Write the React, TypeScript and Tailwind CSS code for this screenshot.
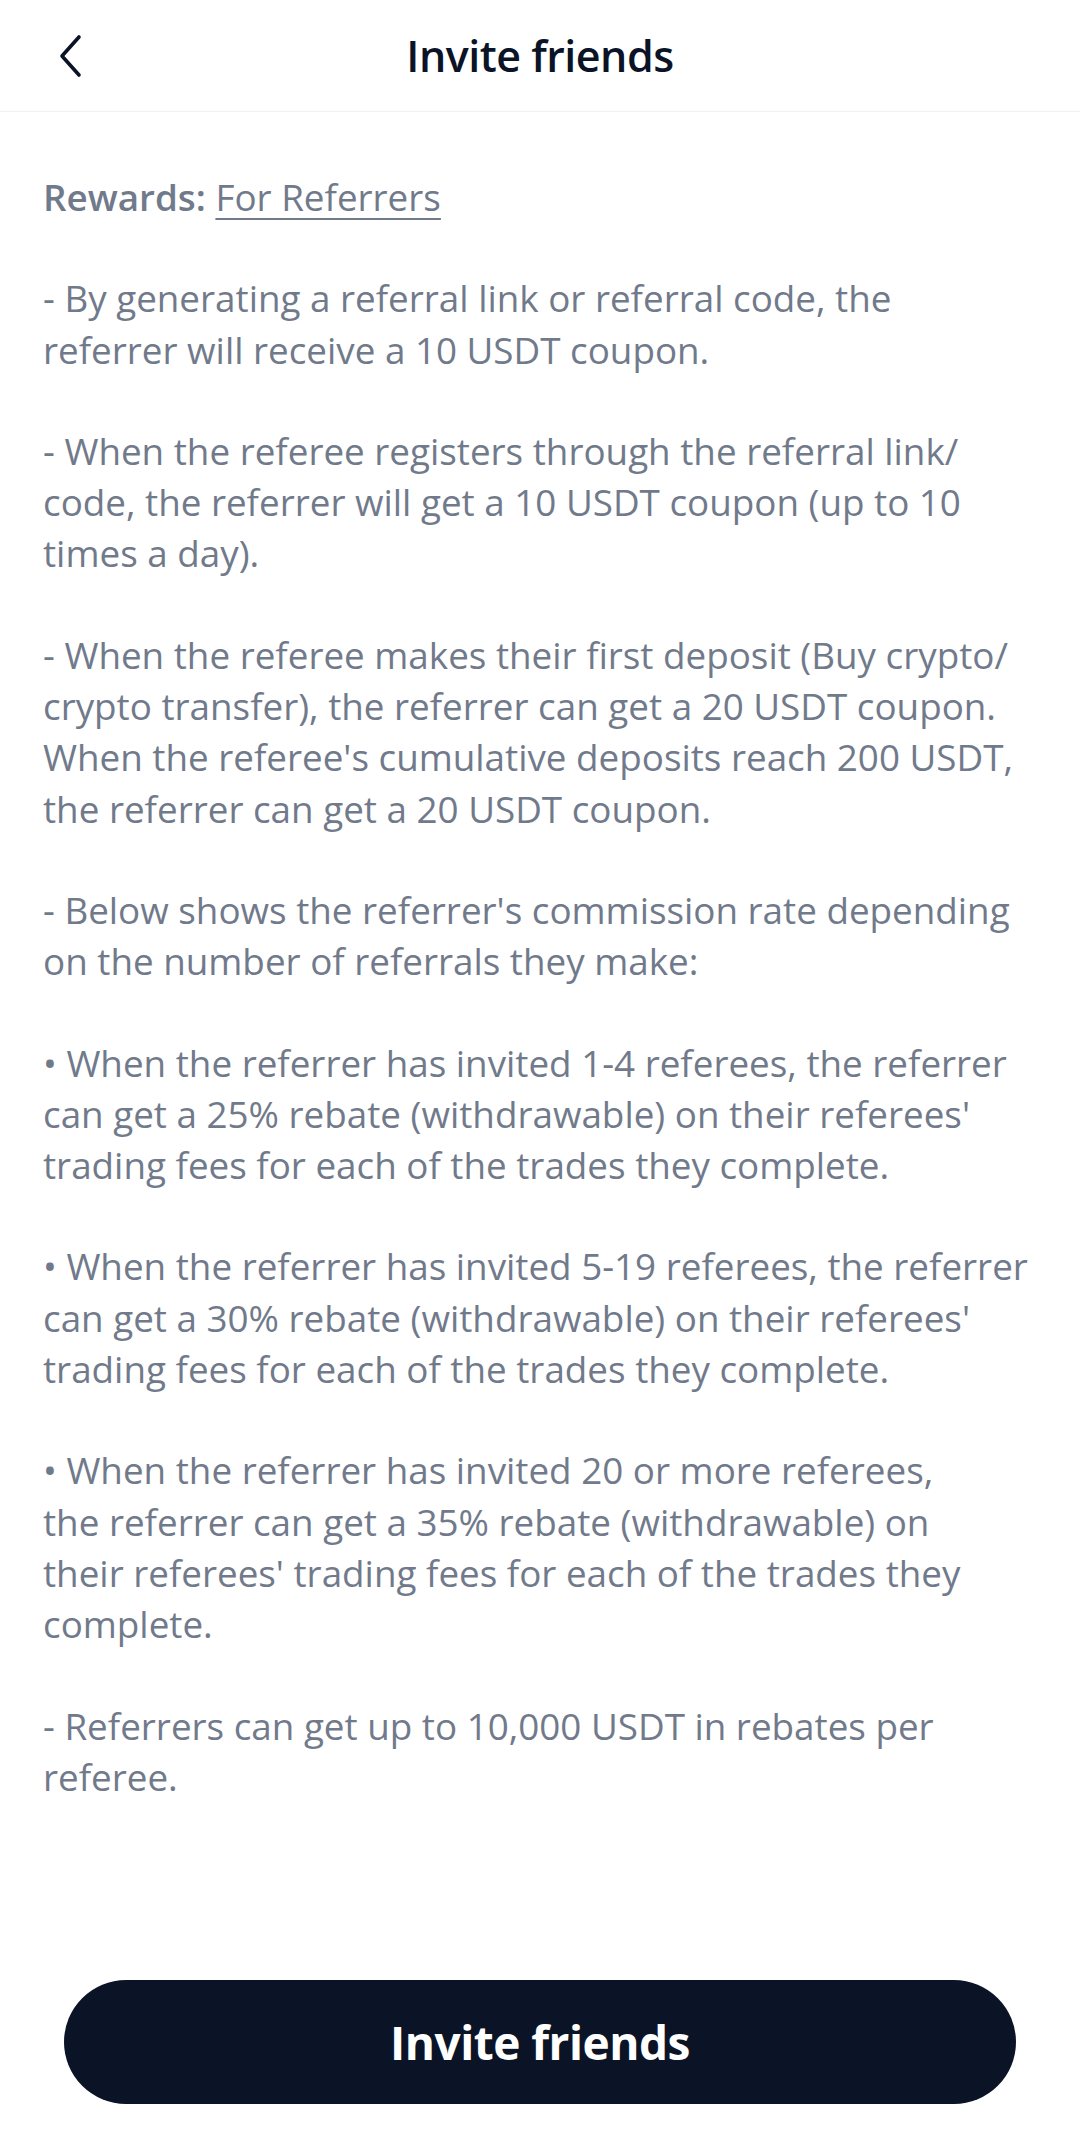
import React from "react";

const paragraphs: string[][] = [
  [
    "- By generating a referral link or referral code, the",
    "referrer will receive a 10 USDT coupon.",
  ],
  [
    "- When the referee registers through the referral link/",
    "code, the referrer will get a 10 USDT coupon (up to 10",
    "times a day).",
  ],
  [
    "- When the referee makes their first deposit (Buy crypto/",
    "crypto transfer), the referrer can get a 20 USDT coupon.",
    "When the referee's cumulative deposits reach 200 USDT,",
    "the referrer can get a 20 USDT coupon.",
  ],
  [
    "- Below shows the referrer's commission rate depending",
    "on the number of referrals they make:",
  ],
  [
    "• When the referrer has invited 1-4 referees, the referrer",
    "can get a 25% rebate (withdrawable) on their referees'",
    "trading fees for each of the trades they complete.",
  ],
  [
    "• When the referrer has invited 5-19 referees, the referrer",
    "can get a 30% rebate (withdrawable) on their referees'",
    "trading fees for each of the trades they complete.",
  ],
  [
    "• When the referrer has invited 20 or more referees,",
    "the referrer can get a 35% rebate (withdrawable) on",
    "their referees' trading fees for each of the trades they",
    "complete.",
  ],
  [
    "- Referrers can get up to 10,000 USDT in rebates per",
    "referee.",
  ],
];

export default function App() {
  return (
    <div
      className="flex min-h-[2132px] w-[1080px] flex-col bg-white"
      style={{ fontFamily: '"Open Sans", "Noto Sans", sans-serif' }}
    >
      <header className="relative flex h-[112px] shrink-0 items-center justify-center border-b border-[#f0f1f3]">
        <button className="absolute left-[50px] top-[30px] flex h-[52px] w-[40px] items-center justify-center">
          <svg width="30" height="46" viewBox="0 0 30 46" fill="none">
            <path
              d="M24 4 L7 23 L24 42"
              stroke="#0b1426"
              strokeWidth="3.6"
              strokeLinecap="round"
              strokeLinejoin="round"
            />
          </svg>
        </button>
        <h1 className="text-[43px] font-semibold leading-none tracking-[-0.5px] text-[#0b1426]">
          Invite friends
        </h1>
      </header>

      <main className="flex flex-1 flex-col gap-[50px] pl-[43px] pr-[20px] pt-[60px] text-[36.8px] leading-[51.3px] text-[#717a8b]">
        <p className="whitespace-nowrap">
          <span className="font-semibold">Rewards:</span>{" "}
          <span className="underline decoration-[2px] underline-offset-[7px]">For Referrers</span>
        </p>
        {paragraphs.map((lines, i) => (
          <p key={i}>
            {lines.map((l, j) => (
              <span key={j} className="block whitespace-nowrap">
                {l}
              </span>
            ))}
          </p>
        ))}
      </main>

      <div className="shrink-0 px-[64px] pb-[28px]">
        <button className="flex h-[124px] w-full items-center justify-center rounded-full bg-[#0b1426] text-[46px] font-bold tracking-[-0.5px] text-white">
          Invite friends
        </button>
      </div>
    </div>
  );
}
